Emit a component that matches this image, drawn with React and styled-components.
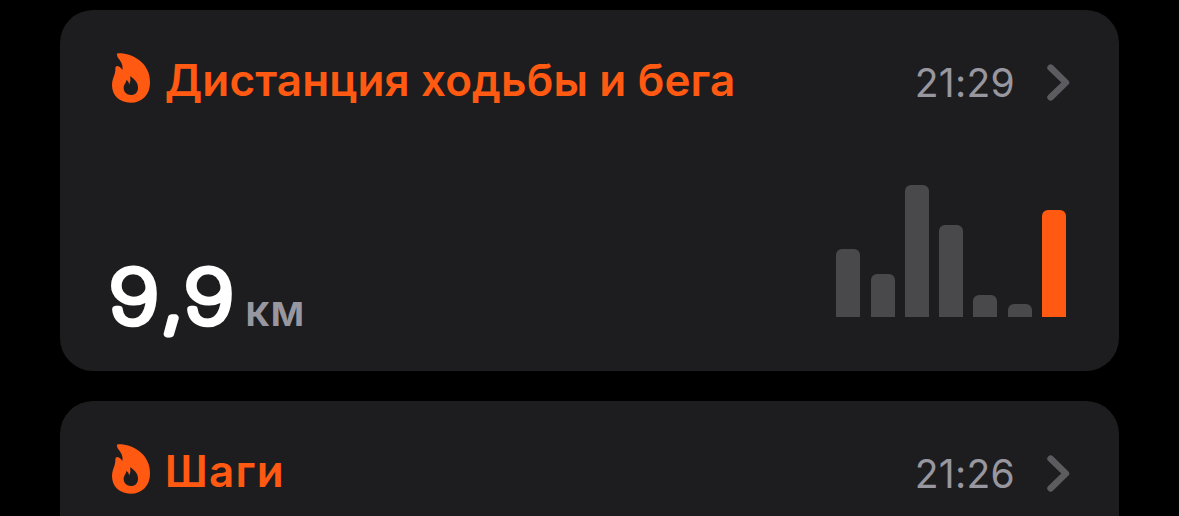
import React from "react";
import styled, { createGlobalStyle, ThemeProvider } from "styled-components";

const theme = {
  color: {
    black: "#000000",
    card: "#1d1d1f",
    orange: "#ff5912",
    grey: "#98979f",
    darkGrey: "#5c5c60",
    bar: "#49494b",
    white: "#ffffff",
  },
  font: `Inter, "Liberation Sans", sans-serif`,
};

const GlobalStyle = createGlobalStyle`
  * {
    box-sizing: border-box;
  }
  body {
    margin: 0;
    background: #000000;
    overflow: hidden;
  }
`;

const Screen = styled.main`
  display: flex;
  flex-direction: column;
  gap: 30px;
  height: 516px;
  padding: 10px 60px 0;
  overflow: hidden;
  background: ${({ theme }) => theme.color.black};
  font-family: ${({ theme }) => theme.font};
`;

const Card = styled.section`
  display: flex;
  flex-direction: column;
  justify-content: space-between;
  flex-shrink: 0;
  height: 361px;
  padding: 42px 49px 0 52px;
  border-radius: 33px;
  background: ${({ theme }) => theme.color.card};
`;

const Header = styled.header`
  display: flex;
  align-items: center;
  height: 52px;
`;

const FlameIcon = styled.svg`
  flex-shrink: 0;
  width: 38.7px;
  height: 50px;
  margin-right: 14px;
  fill: ${({ theme }) => theme.color.orange};
`;

const Title = styled.h2`
  flex: 1;
  margin: 0;
  padding-top: 4px;
  font-size: 44px;
  line-height: 52px;
  font-weight: 600;
  letter-spacing: ${({ $spacing }) => $spacing || "0.15px"};
  white-space: nowrap;
  color: ${({ theme }) => theme.color.orange};
`;

const Time = styled.time`
  margin-right: 32px;
  padding-top: 9px;
  font-size: 39px;
  line-height: 48px;
  font-weight: 400;
  letter-spacing: 0.3px;
  color: ${({ theme }) => theme.color.grey};
`;

const ChevronIcon = styled.svg`
  flex-shrink: 0;
  width: 23px;
  height: 37px;
  margin-top: 9px;
  fill: none;
  stroke: ${({ theme }) => theme.color.darkGrey};
  stroke-width: 6.6;
  stroke-linecap: round;
  stroke-linejoin: round;
`;

const Body = styled.div`
  display: flex;
  align-items: flex-end;
  justify-content: space-between;
  padding: 0 4px 54px 0;
`;

const Reading = styled.div`
  display: flex;
  align-items: flex-end;
  margin: 0 0 -28px -4px;
`;

// svg text, because only there the outline gets round joins
const Value = styled.svg`
  width: 130px;
  height: 90px;
  overflow: visible;

  text {
    font-size: 73.5px;
    font-weight: 100;
    fill: ${({ theme }) => theme.color.white};
    stroke: ${({ theme }) => theme.color.white};
    stroke-width: 7.2px;
    stroke-linejoin: round;
  }
`;

const Unit = styled.span`
  margin: 0 0 9px 7px;
  font-size: 43px;
  line-height: 52px;
  font-weight: 600;
  letter-spacing: 0.8px;
  color: ${({ theme }) => theme.color.grey};
`;

const Chart = styled.div`
  display: flex;
  align-items: flex-end;
  gap: 10.3px;
  height: 132px;
`;

const Bar = styled.div`
  width: 24px;
  border-radius: 6px 6px 0 0;
  background: ${({ theme, $active }) =>
    $active ? theme.color.orange : theme.color.bar};
`;

const distance = [68, 43, 132, 92, 22, 13, 107];

const Flame = () => (
  <FlameIcon viewBox="36 26 116 150" aria-hidden="true">
    <path
      fillRule="evenodd"
      d="M54 27C75 26 100 34 118 48C140 65 150 88 150 115C150 151 126 175 92 175C58 175 36 153 36 123C36 101 47 91 46 73C46 68 48 65 52 65C58 66 63 70 67 77C69 68 67 59 61 50C56 43 52 39 51 33C50 29 51 27 54 27ZM90 96C100 102 114 112 114 130C114 144 105 152 93 152C80 152 71 143 71 131C71 119 79 116 79 107C84 109 87 114 87 121C92 113 92 104 90 96Z"
    />
  </FlameIcon>
);

const CardHeader = ({ title, time, spacing }) => (
  <Header>
    <Flame />
    <Title $spacing={spacing}>{title}</Title>
    <Time>{time}</Time>
    <ChevronIcon viewBox="0 0 23 37" aria-hidden="true">
      <path d="M3.6 3.7L18.9 18.5L3.6 33.3" />
    </ChevronIcon>
  </Header>
);

const App = () => {
  return (
    <ThemeProvider theme={theme}>
      <GlobalStyle />
      <Screen>
        <Card>
          <CardHeader title="Дистанция ходьбы и бега" time="21:29" />
          <Body>
            <Reading>
              <Value viewBox="0 0 130 90">
                <text y="68" x="0.9 44 63.4" transform="scale(1.2 1)">
                  9,9
                </text>
              </Value>
              <Unit>км</Unit>
            </Reading>
            <Chart>
              {distance.map((height, index) => (
                <Bar
                  key={index}
                  $active={index === distance.length - 1}
                  style={{ height }}
                />
              ))}
            </Chart>
          </Body>
        </Card>
        <Card>
          <CardHeader title="Шаги" time="21:26" spacing="1.2px" />
        </Card>
      </Screen>
    </ThemeProvider>
  );
};

export default App;
